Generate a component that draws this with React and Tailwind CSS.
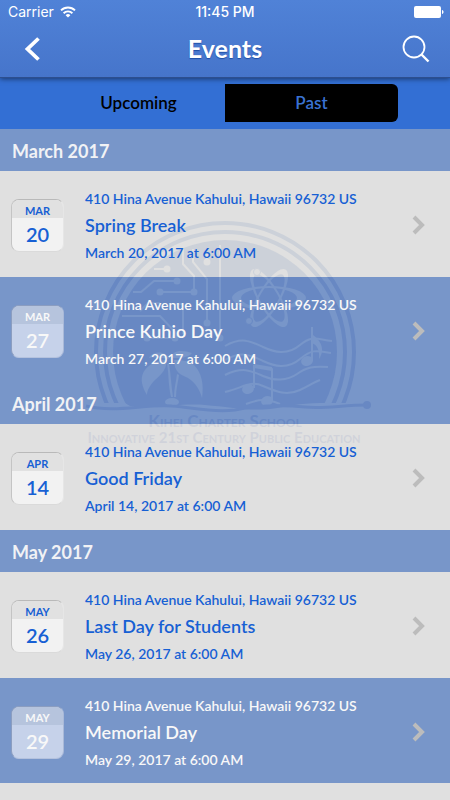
import React, { useState } from "react";

const months = [
  {
    name: "March 2017",
    events: [
      { month: "MAR", day: "20", title: "Spring Break", date: "March 20, 2017 at 6:00 AM" },
      { month: "MAR", day: "27", title: "Prince Kuhio Day", date: "March 27, 2017 at 6:00 AM", shaded: true },
    ],
  },
  {
    name: "April 2017",
    events: [
      { month: "APR", day: "14", title: "Good Friday", date: "April 14, 2017 at 6:00 AM" },
    ],
  },
  {
    name: "May 2017",
    events: [
      { month: "MAY", day: "26", title: "Last Day for Students", date: "May 26, 2017 at 6:00 AM" },
      { month: "MAY", day: "29", title: "Memorial Day", date: "May 29, 2017 at 6:00 AM", shaded: true },
    ],
  },
];

const ADDRESS = "410 Hina Avenue Kahului, Hawaii 96732 US";

const StatusBar = () => (
  <div className="relative flex h-6 items-center justify-between pl-2 pr-1.5 font-['Inter',sans-serif] text-sm">
    <div className="flex items-center gap-1.5">
      <span>Carrier</span>
      <svg width="16" height="12" viewBox="0 0 16 12" fill="none" stroke="currentColor" strokeWidth="1.9">
        <path d="M1 4.4a10 10 0 0 1 14 0" />
        <path d="M3.6 7.2a6.3 6.3 0 0 1 8.8 0" />
        <path d="M8 11.6 5.6 9.2a3.4 3.4 0 0 1 4.8 0z" fill="currentColor" stroke="none" />
      </svg>
    </div>
    <span className="absolute left-1/2 -translate-x-1/2 font-medium">11:45 PM</span>
    <svg width="30" height="12" viewBox="0 0 30 12" fill="currentColor">
      <rect width="27" height="12" rx="2" />
      <path d="M28 4c2 .4 2 3.600 0 4z" />
    </svg>
  </div>
);

const Header = () => (
  <header className="relative z-20 h-[78px] border-b border-[#2d4f8f] bg-linear-to-b from-[#5082d7] to-[#4675cb] text-white shadow-[0_1px_5px_rgba(0,0,0,0.5)]">
    <StatusBar />
    <div className="flex h-[50px] items-center justify-between px-5">
      <button aria-label="Back" className="flex w-7 items-center">
        <svg width="26" height="26" viewBox="0 0 26 26" fill="none" stroke="currentColor" strokeWidth="3.800">
          <path d="M18.500 2.500 7.500 13l11 10.500" />
        </svg>
      </button>
      <h1 className="text-[25px] font-bold [text-shadow:0_1px_1px_rgba(0,50,140,0.6)]">Events</h1>
      <button aria-label="Search" className="flex w-7 items-center">
        <svg width="28" height="28" viewBox="0 0 28 28" fill="none" stroke="currentColor">
          <circle cx="12" cy="12" r="10.500" strokeWidth="1.800" />
          <path d="m19.500 19.500 7 7" strokeWidth="2.400" />
        </svg>
      </button>
    </div>
  </header>
);

const Tabs = ({ tab, setTab }) => (
  <div className="bg-[#336fd4] px-[52px] pt-[6px] pb-[7px]">
    <div className="grid h-[38px] grid-cols-2 overflow-hidden rounded-md text-[17px] font-semibold">
      {["Upcoming", "Past"].map((name) => (
        <button
          key={name}
          onClick={() => setTab(name)}
          className={tab === name ? "bg-black text-[#3a72d2]" : "text-black"}
        >
          {name}
        </button>
      ))}
    </div>
  </div>
);

// School seal behind the list. The fill changes where the rows change colour.
const Seal = () => (
  <svg
    className="pointer-events-none absolute left-1/2 top-[81px] -ml-[145px]"
    width="300"
    height="240"
    viewBox="0 0 300 240"
    aria-hidden="true"
  >
    <defs>
      <linearGradient id="sealFill" gradientUnits="userSpaceOnUse" x1="0" y1="0" x2="0" y2="240">
        <stop offset="0" stopColor="#ccd1d9" />
        <stop offset="0.2792" stopColor="#ccd1d9" />
        <stop offset="0.2792" stopColor="#6888c3" />
        <stop offset="0.8917" stopColor="#6888c3" />
        <stop offset="0.8917" stopColor="#d0d2da" />
        <stop offset="1" stopColor="#d0d2da" />
      </linearGradient>
      <clipPath id="sealTop">
        <path d="M0 0H300V193H240C220 193 205 197 190 199C165 201 150 197 125 195C100 193 80 199 50 196L45 193H0z" />
      </clipPath>
      <mask id="sealCut" maskUnits="userSpaceOnUse" x="0" y="0" width="300" height="240">
        <rect width="300" height="240" fill="#fff" />
        <g fill="none" stroke="#000" strokeWidth="2">
          {/* circuit */}
          <path d="M74 59h14M53 82h8l13-11h23M60 101l8-8h12" />
          <path d="M80 82h34M42 106h38l15 16v6" />
          <path d="M103 39v15l11 12v16M113 39v13l14 17v44M127 52v-8M140 35v93" />
          <path d="M93 94h10v30M67 128h28" />
          {/* staff */}
          <path d="M145 136c18-10 27-4 38 1s24 9 37-2 18-5 32-4" />
          <path d="M145 150c18-10 27-4 38 1s24 9 37-2 18-8 31-6" />
          <path d="M145 165c18-9 27-4 38 1s24 5 34-2 16-8 31-7" />
          <path d="M145 182c18-4 24-12 38-6s24 10 37 4 12-7 20-10" />
          <path d="M174 178v-22l18 3v32M232 151v-34" />
          <path d="M166 194c8-3 12-4 17-4s10 1 17 4" />
        </g>
        <g fill="#000">
          {/* atom */}
          <g fillRule="evenodd">
            <path transform="translate(189 88)" d="M-37 0a37 12 0 1 0 74 0a37 12 0 1 0-74 0zM-28 0a28 10 0 1 0 56 0a28 10 0 1 0-56 0z" />
            <path transform="translate(189 88) rotate(60)" d="M-33 0a33 11 0 1 0 66 0a33 11 0 1 0-66 0zM-27 0a27 9 0 1 0 54 0a27 9 0 1 0-54 0z" />
            <path transform="translate(189 88) rotate(-60)" d="M-33 0a33 11 0 1 0 66 0a33 11 0 1 0-66 0zM-27 0a27 9 0 1 0 54 0a27 9 0 1 0-54 0z" />
          </g>
          <circle cx="177" cy="62" r="3.500" stroke="#fff" />
          <circle cx="169" cy="111" r="3.500" stroke="#fff" />
          <circle cx="87" cy="59" r="3.500" />
          <circle cx="97" cy="71" r="3.500" />
          <circle cx="80" cy="82" r="3.500" />
          <circle cx="114" cy="82" r="3.500" />
          <circle cx="127" cy="52" r="3.500" />
          <circle cx="127" cy="113" r="3.500" />
          <circle cx="140" cy="128" r="3.500" />
          <circle cx="95" cy="128" r="3.500" />
          <circle cx="67" cy="128" r="3.500" />
          <path d="M231 117l2 8c7 5 13 14 6 24 1-9-2-14-7-16z" />
          <ellipse cx="227" cy="151" rx="6" ry="5" transform="rotate(-15 227 151)" />
          <ellipse cx="168" cy="179" rx="6" ry="5" transform="rotate(-15 168 179)" />
          <ellipse cx="187" cy="191" rx="6" ry="5" transform="rotate(-15 187 191)" />
          <path d="M174 154l18 3v4l-18-3z" />
          {/* seedling */}
          <path d="M87 150C74 150 60 158 62 173c1 5 3 9 5 12 0-5 3-9 6-13 6-6 13-10 14-22z" />
          <path d="M94 150c0 12 7 15 14 18 7 4 12 12 14 20 2-13 0-25-8-33-6-5-14-5-20-5z" />
          <path d="M69 148c3-7 17-8 20 1-7-1-13-2-20-1zM92 148c-1-7 9-9 20-5-4 5-12 5-20 5z" />
          <path d="M87 154c2 10 1 20 4 33h2c-2-12-2-22-4-33zM97 164c-1 8-3 15-3 23h2c0-8 2-15 3-22z" />
          <ellipse cx="92" cy="192" rx="7" ry="4" />
        </g>
      </mask>
    </defs>
    <g fill="url(#sealFill)">
      <g clipPath="url(#sealTop)">
        <circle cx="145" cy="142" r="129" fill="none" stroke="url(#sealFill)" strokeWidth="4" />
        <circle cx="145" cy="142" r="120" fill="none" stroke="url(#sealFill)" strokeWidth="4" />
        <circle cx="145" cy="142" r="112" mask="url(#sealCut)" />
      </g>
      <path d="M6 196C35 203 65 194 92 196C112 197 130 203 155 200C180 195 205 195 225 197C245 199 262 195 288 195" fill="none" stroke="url(#sealFill)" strokeWidth="3" />
      <circle cx="287" cy="195" r="4" />
      <g className="font-['Lato',sans-serif] font-bold [font-variant-caps:small-caps]" textAnchor="middle">
        <text x="145" y="217" fontSize="17">Kihei Charter School</text>
        <text x="144" y="233" fontSize="15">Innovative 21st Century Public Education</text>
      </g>
    </g>
  </svg>
);

const EventRow = ({ event }) => {
  const { month, day, title, date, shaded } = event;
  return (
    <li className={shaded ? "h-[105px] bg-[#7896c9] text-[#f8f8f8]" : "h-[106px] bg-[#e0e0e0] text-[#1760d4]"}>
      <a href="#event" className="relative z-10 flex h-full items-start pl-[11px] pr-6">
        <div
          className={`mt-7 h-[53px] w-[53px] shrink-0 overflow-hidden rounded-lg border text-center ${
            shaded
              ? "border-t-[#8b9dc0] border-r-[#a9b9d8] border-b-[#b4c2de] border-l-[#8b9dc0] bg-[#c6d2ea]"
              : "border-t-[#b9b9b9] border-r-[#e6e6e6] border-b-[#dadada] border-l-[#c4c4c4] bg-[#f2f2f2]"
          }`}
        >
          <div className={`h-[18px] pt-[3px] text-[11px] leading-4 font-bold ${shaded ? "bg-[#b6c4dd]" : "bg-[#e1e1e1]"}`}>
            {month}
          </div>
          <div className="text-xl leading-8 font-semibold">{day}</div>
        </div>
        <div className="ml-[21px] min-w-0 flex-1 pt-[14px] text-sm leading-[27px] font-semibold">
          <p className="whitespace-nowrap">{ADDRESS}</p>
          <h3 className="text-lg leading-[27px]">{title}</h3>
          <p>{date}</p>
        </div>
        <svg className="mt-11 shrink-0" width="14" height="20" viewBox="0 0 14 20" fill="none" stroke="#bcbcbc" strokeWidth="4">
          <path d="M2 2l8 8-8 8" />
        </svg>
      </a>
    </li>
  );
};

export default function App() {
  const [tab, setTab] = useState("Past");

  return (
    <div className="min-h-screen bg-[#e0e0e0] font-['Lato',sans-serif]">
      <Header />
      <Tabs tab={tab} setTab={setTab} />
      <main className="relative">
        <Seal />
        {months.map((m) => (
          <section key={m.name}>
            <h2 className="h-[42px] bg-[#7896c9] px-3 text-lg leading-[44px] font-bold text-[#f1f2f5]">
              <span className="relative z-10">{m.name}</span>
            </h2>
            <ul>
              {m.events.map((event) => (
                <EventRow key={event.title} event={event} />
              ))}
            </ul>
          </section>
        ))}
      </main>
    </div>
  );
}
